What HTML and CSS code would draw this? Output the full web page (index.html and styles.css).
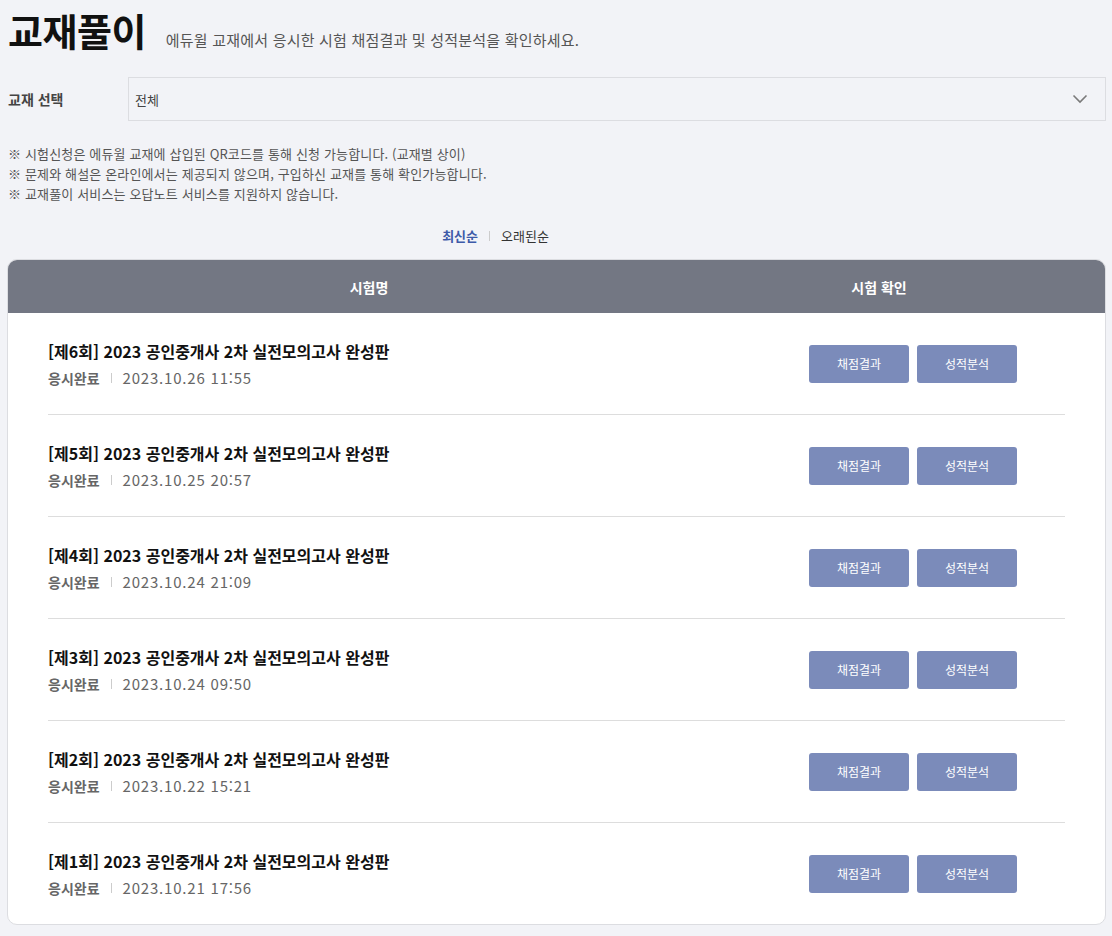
FILE: index.html
```html
<!DOCTYPE html>
<html lang="ko">
<head>
    <meta charset="UTF-8">
    <meta name="viewport" content="width=device-width, initial-scale=1.0">
    <title>교재풀이</title>
    <link rel="stylesheet" href="styles.css">
</head>
<body>
    <div class="page">
        <div class="page-head">
            <h1>교재풀이</h1>
            <p class="desc">에듀윌 교재에서 응시한 시험 채점결과 및 성적분석을 확인하세요.</p>
        </div>

        <div class="book-select">
            <label for="book">교재 선택</label>
            <div class="select-box">
                <span>전체</span>
                <svg width="16" height="10" viewBox="0 0 16 10"><path d="M1.5 1.5 L8 8 L14.5 1.5" fill="none" stroke="#7a7a7a" stroke-width="1.6"/></svg>
            </div>
        </div>

        <ul class="notice">
            <li>※ 시험신청은 에듀윌 교재에 삽입된 QR코드를 통해 신청 가능합니다. (교재별 상이)</li>
            <li>※ 문제와 해설은 온라인에서는 제공되지 않으며, 구입하신 교재를 통해 확인가능합니다.</li>
            <li>※ 교재풀이 서비스는 오답노트 서비스를 지원하지 않습니다.</li>
        </ul>

        <div class="sort">
            <a class="on">최신순</a>
            <span class="bar"></span>
            <a>오래된순</a>
        </div>

        <div class="exam-table">
            <div class="thead">
                <div class="th th-name">시험명</div>
                <div class="th th-check">시험 확인</div>
            </div>
            <div class="tbody" id="examList"></div>
        </div>
    </div>

    <script>
        // 응시 내역 목록
        const exams = [
            { no: 6, date: '2023.10.26 11:55' },
            { no: 5, date: '2023.10.25 20:57' },
            { no: 4, date: '2023.10.24 21:09' },
            { no: 3, date: '2023.10.24 09:50' },
            { no: 2, date: '2023.10.22 15:21' },
            { no: 1, date: '2023.10.21 17:56' }
        ];

        const list = document.getElementById('examList');
        exams.forEach(function(exam) {
            const row = document.createElement('div');
            row.className = 'row';
            row.innerHTML =
                '<div class="info">' +
                    '<p class="name">[제' + exam.no + '회] 2023 공인중개사 2차 실전모의고사 완성판</p>' +
                    '<p class="meta"><span class="state">응시완료</span><span class="bar"></span><span class="date">' + exam.date + '</span></p>' +
                '</div>' +
                '<div class="btns">' +
                    '<button>채점결과</button>' +
                    '<button>성적분석</button>' +
                '</div>';
            list.appendChild(row);
        });
    </script>
</body>
</html>
```

FILE: styles.css
```css
body {
    margin: 0;
    background: #f2f3f7;
    font-family: "Noto Sans CJK KR", "Noto Sans", sans-serif;
    color: #222;
}
.page {
    padding: 4px 6px 10px 7px;
}
.page-head {
    display: flex;
    align-items: baseline;
    gap: 20px;
    padding-left: 1px;
}
h1 {
    margin: 0;
    font-size: 38px;
    font-weight: 700;
    letter-spacing: -0.5px;
    color: #111;
    line-height: 51px;
}
.desc {
    margin: 0;
    font-size: 15px;
    letter-spacing: 0.2px;
    color: #555;
}
.book-select {
    display: flex;
    align-items: center;
    margin-top: 22px;
}
.book-select label {
    width: 120px;
    padding-left: 1px;
    font-size: 14px;
    font-weight: 700;
    color: #444;
}
.select-box {
    flex: 1;
    height: 42px;
    border: 1px solid #dcdde1;
    display: flex;
    align-items: center;
    justify-content: space-between;
    padding: 0 17px 0 6px;
    font-size: 13px;
    color: #444;
}
.notice {
    list-style: none;
    margin: 23px 0 0;
    padding: 0 0 0 1px;
    font-size: 13px;
    line-height: 20px;
    letter-spacing: 0.15px;
    color: #555;
}
.sort {
    display: flex;
    justify-content: center;
    align-items: center;
    gap: 11px;
    margin-top: 22px;
    padding-right: 122px;
    font-size: 13px;
    line-height: 20px;
    color: #333;
}
.sort .on {
    color: #3d5aa8;
    font-weight: 700;
}
.bar {
    display: inline-block;
    width: 1px;
    height: 10px;
    background: #ccc;
}
.exam-table {
    margin-top: 13px;
    background: #fff;
    border: 1px solid #dcdde1;
    border-radius: 10px;
    overflow: hidden;
}
.thead {
    display: flex;
    height: 53px;
    align-items: center;
    background: #737783;
    color: #fff;
    font-size: 14px;
    font-weight: 700;
}
.th {
    text-align: center;
}
.th-name {
    width: 722px;
}
.th-check {
    width: 298px;
}
.tbody {
    padding: 0 40px;
}
.row {
    display: flex;
    align-items: center;
    justify-content: space-between;
    height: 101px;
    border-bottom: 1px solid #ddd;
    padding-right: 48px;
}
.row:last-child {
    border-bottom: none;
}
.info p {
    margin: 0;
}
.name {
    font-size: 16px;
    font-weight: 700;
    color: #111;
    line-height: 24px;
}
.meta {
    display: flex;
    align-items: center;
    gap: 11px;
    margin-top: 4px !important;
    font-size: 15px;
    line-height: 22px;
    color: #666;
}
.meta .state {
    font-weight: 700;
    font-size: 14px;
    color: #666;
}
.meta .date {
    letter-spacing: 0.8px;
}
.btns {
    display: flex;
    gap: 8px;
}
.btns button {
    width: 100px;
    height: 38px;
    border: none;
    border-radius: 3px;
    background: #7b8bba;
    color: #fff;
    font-family: inherit;
    font-size: 12px;
    cursor: pointer;
}
```
